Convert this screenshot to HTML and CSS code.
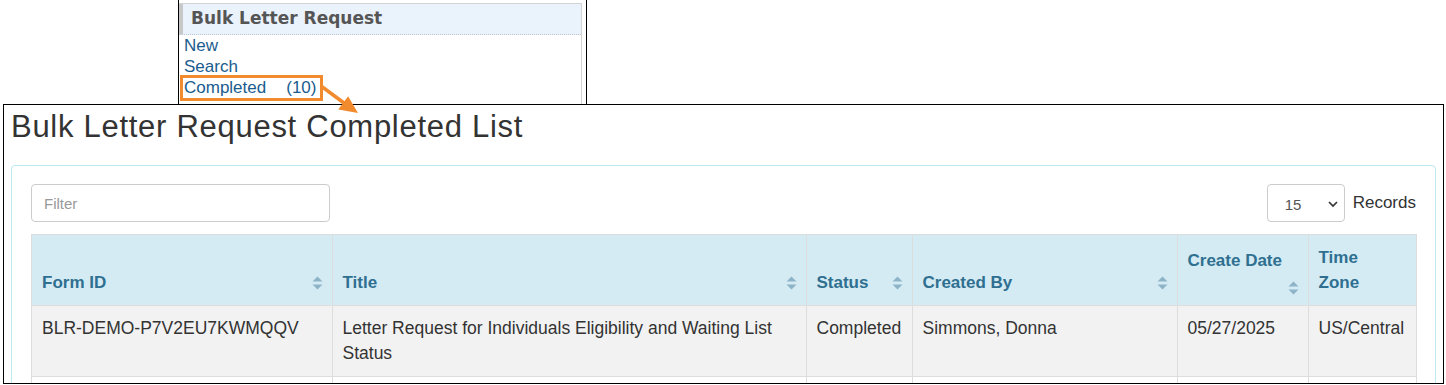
FILE: index.html
```html
<!DOCTYPE html>
<html lang="en">
<head>
<meta charset="utf-8">
<title>Bulk Letter Request Completed List</title>
<link rel="stylesheet" href="styles.css">
</head>
<body>
<div class="menu">
  <div class="menu-panel">
    <div class="menu-head">Bulk Letter Request</div>
    <a class="menu-link" href="#">New</a>
    <a class="menu-link" href="#">Search</a>
    <a class="menu-link" href="#"><span>Completed</span><span class="count">(10)</span></a>
  </div>
  <div class="callout-box"></div>
</div>
<svg class="callout-arrow" width="60" height="40" viewBox="0 0 60 40">
  <line x1="1" y1="6" x2="24" y2="23" stroke="#f28a2e" stroke-width="3.5"/>
  <polygon points="38,33 18.3,29.6 28.1,16.2" fill="#f28a2e"/>
</svg>

<div class="main">
  <h1 class="title">Bulk Letter Request Completed List</h1>
  <div class="panel">
    <div class="toolbar">
      <input class="filter" type="text" placeholder="Filter">
      <div class="records">
        <div class="select"><span>15</span>
          <svg width="10" height="7" viewBox="0 0 10 7"><polyline points="1,1 5,5 9,1" fill="none" stroke="#333" stroke-width="1.7"/></svg>
        </div>
        <span class="records-label">Records</span>
      </div>
    </div>
    <table class="grid">
      <colgroup>
        <col class="c-id"><col class="c-title"><col class="c-status"><col class="c-by"><col class="c-date"><col class="c-tz">
      </colgroup>
      <thead>
        <tr>
          <th><div class="th"><span>Form ID</span><span class="sort"><svg width="11" height="14" viewBox="0 0 11 14"><polygon points="5.5,0.5 10.5,5.5 0.5,5.5"/><polygon points="0.5,8.5 10.5,8.5 5.5,13.5"/></svg></span></div></th>
          <th><div class="th"><span>Title</span><span class="sort"><svg width="11" height="14" viewBox="0 0 11 14"><polygon points="5.5,0.5 10.5,5.5 0.5,5.5"/><polygon points="0.5,8.5 10.5,8.5 5.5,13.5"/></svg></span></div></th>
          <th><div class="th"><span>Status</span><span class="sort"><svg width="11" height="14" viewBox="0 0 11 14"><polygon points="5.5,0.5 10.5,5.5 0.5,5.5"/><polygon points="0.5,8.5 10.5,8.5 5.5,13.5"/></svg></span></div></th>
          <th><div class="th"><span>Created By</span><span class="sort"><svg width="11" height="14" viewBox="0 0 11 14"><polygon points="5.5,0.5 10.5,5.5 0.5,5.5"/><polygon points="0.5,8.5 10.5,8.5 5.5,13.5"/></svg></span></div></th>
          <th><div class="th th-stack"><span>Create Date</span><span class="sort sort-low"><svg width="11" height="14" viewBox="0 0 11 14"><polygon points="5.5,0.5 10.5,5.5 0.5,5.5"/><polygon points="0.5,8.5 10.5,8.5 5.5,13.5"/></svg></span></div></th>
          <th><div class="th"><span class="narrow">Time Zone</span></div></th>
        </tr>
      </thead>
      <tbody>
        <tr class="odd">
          <td>BLR-DEMO-P7V2EU7KWMQQV</td>
          <td>Letter Request for Individuals Eligibility and Waiting List Status</td>
          <td>Completed</td>
          <td>Simmons, Donna</td>
          <td>05/27/2025</td>
          <td>US/Central</td>
        </tr>
        <tr class="even">
          <td>&nbsp;</td><td>&nbsp;</td><td>&nbsp;</td><td>&nbsp;</td><td>&nbsp;</td><td>&nbsp;</td>
        </tr>
      </tbody>
    </table>
  </div>
</div>
</body>
</html>
```

FILE: styles.css
```css
* { box-sizing: border-box; }

body {
  margin: 0;
  background: #ffffff;
  font-family: "Liberation Sans", Arial, sans-serif;
  color: #333333;
  position: relative;
}

/* ---------- left menu snippet ---------- */
.menu {
  position: relative;
  margin-left: 178px;
  width: 409px;
  height: 104px;
  border-left: 1px solid #000;
  border-right: 1px solid #000;
  padding: 3px 4px 0 0;
}

.menu-panel {
  height: 101px;
  border-top: 1px solid #d4d4d4;
  border-right: 1px solid #d4d4d4;
}

.menu-head {
  height: 31px;
  background: #eaf2fb;
  border-left: 4px solid #c8c8c8;
  border-bottom: 1px dotted #b9c6d3;
  padding-left: 8px;
  font-family: "DejaVu Sans", Verdana, sans-serif;
  font-weight: bold;
  font-size: 17px;
  line-height: 29px;
  color: #555555;
}

.menu-link {
  display: block;
  padding-left: 5px;
  font-size: 17px;
  line-height: 21px;
  color: #1a5c8e;
  text-decoration: none;
}

.menu-link .count { margin-left: 20px; }

.callout-box {
  position: absolute;
  left: 1px;
  top: 75px;
  width: 143px;
  height: 26px;
  border: 3px solid #f28a2e;
}

.callout-arrow {
  position: absolute;
  left: 320px;
  top: 80px;
  z-index: 5;
}

/* ---------- main list ---------- */
.main {
  margin: 0 2px 0 3px;
  height: 280px;
  border: 1px solid #000;
  overflow: hidden;
}

.title {
  margin: 5px 0 21px 0;
  padding-left: 7px;
  font-weight: normal;
  font-size: 31px;
  letter-spacing: 0.72px;
  line-height: 34px;
  color: #333333;
}

.panel {
  margin: 0 7px;
  border: 1px solid #bce8f1;
  border-radius: 4px;
  padding: 18px 19px;
}

.toolbar {
  display: flex;
  justify-content: space-between;
  align-items: center;
  height: 38px;
}

.filter {
  width: 299px;
  height: 38px;
  border: 1px solid #cccccc;
  border-radius: 4px;
  padding: 0 12px;
  font-family: "Liberation Sans", Arial, sans-serif;
  font-size: 15px;
  color: #555;
  outline: none;
}

.filter::placeholder { color: #999999; }

.records {
  display: flex;
  align-items: center;
  gap: 8px;
}

.select {
  width: 78px;
  height: 38px;
  border: 1px solid #cccccc;
  border-radius: 4px;
  display: flex;
  align-items: center;
  justify-content: space-between;
  padding: 2px 6px 0 17px;
  font-size: 15px;
  color: #555555;
}

.records-label {
  font-size: 17px;
  color: #333333;
}

.grid {
  margin-top: 12px;
  width: 1385px;
  table-layout: fixed;
  border-collapse: collapse;
  border: 1px solid #dddddd;
}

.c-id { width: 300.5px; }
.c-title { width: 474px; }
.c-status { width: 106px; }
.c-by { width: 265px; }
.c-date { width: 131px; }
.c-tz { width: 108.5px; }

.grid th {
  background: #d4ebf4;
  color: #2f6f90;
  font-size: 17px;
  font-weight: bold;
  text-align: left;
  vertical-align: bottom;
  line-height: 25px;
  padding: 10px 9px 10px 10px;
  border: 1px solid #dddddd;
}

.th {
  display: flex;
  justify-content: space-between;
  align-items: flex-end;
}

.th-stack {
  flex-direction: column;
  align-items: stretch;
}

.narrow { width: min-content; }

.sort {
  display: flex;
  align-items: center;
  height: 25px;
  flex-shrink: 0;
}

.sort svg { fill: #8db3c7; display: block; }

.sort-low {
  align-self: flex-end;
  height: 14px;
  margin-top: 8px;
}

.grid td {
  font-size: 17.5px;
  line-height: 25px;
  padding: 10px 10px 10px 10px;
  border: 1px solid #dddddd;
  vertical-align: top;
  color: #333333;
}

.grid tr.odd td { background: #f2f2f2; }
.grid tr.even td { background: #ffffff; }
```
